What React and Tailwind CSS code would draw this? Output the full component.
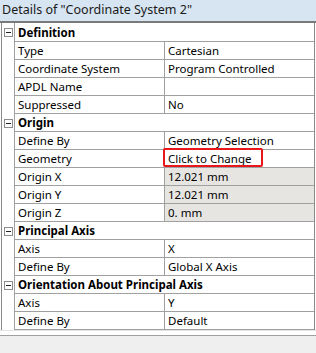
import React from "react";

const sections = [
  {
    title: "Definition",
    first: true,
    rows: [
      ["Type", "Cartesian"],
      ["Coordinate System", "Program Controlled"],
      ["APDL Name", ""],
      ["Suppressed", "No"],
    ],
  },
  {
    title: "Origin",
    rows: [
      ["Define By", "Geometry Selection"],
      ["Geometry", "Click to Change", "red"],
      ["Origin X", "12.021 mm", "gray"],
      ["Origin Y", "12.021 mm", "gray"],
      ["Origin Z", "0. mm", "gray"],
    ],
  },
  {
    title: "Principal Axis",
    rows: [
      ["Axis", "X"],
      ["Define By", "Global X Axis"],
    ],
  },
  {
    title: "Orientation About Principal Axis",
    rows: [
      ["Axis", "Y"],
      ["Define By", "Default"],
    ],
  },
];

function Minus() {
  return (
    <div className="w-[9px] h-[9px] border border-[#8c8c8c] bg-white flex items-center justify-center">
      <div className="w-[5px] h-[1px] bg-[#202020]" />
    </div>
  );
}

export default function App() {
  return (
    <div
      className="w-[316px] h-[353px] bg-white flex flex-col overflow-hidden text-black"
      style={{ fontFamily: '"Noto Sans", "Open Sans", sans-serif' }}
    >
      <div className="h-[21px] bg-[#d7e4f1] flex items-center pl-[2px] text-[12.5px] text-[#1a1a1a] leading-none">
        Details of "Coordinate System 2"
      </div>
      <div className="h-[2px] bg-[#7a7a7a]" />
      <div className="h-[307px] ml-[1px] w-[314px] border-l border-r border-[#8a8a8a] overflow-hidden text-[11.5px] leading-none">
        {sections.map((s) => (
          <div key={s.title}>
            <div className={`flex ${s.first ? "h-[19px]" : "h-[18px]"}`}>
              <div className="w-[13px] flex items-center justify-end pr-[1px] border-r border-[#a0a0a0]">
                <Minus />
              </div>
              <div className="flex-1 border-b border-[#a0a0a0] flex items-center pl-[3px] pt-[1px] font-bold whitespace-nowrap overflow-hidden">
                {s.title}
              </div>
            </div>
            {s.rows.map(([k, v, kind], i) => (
              <div key={i} className="flex h-[18px]">
                <div className="w-[13px] border-r border-[#a0a0a0]" />
                <div className="w-[150px] border-b border-r border-[#a0a0a0] flex items-center pl-[3px] pt-[1px] whitespace-nowrap">
                  {k}
                </div>
                <div
                  className={`relative flex-1 border-b border-[#a0a0a0] flex items-center pl-[3px] pt-[1px] whitespace-nowrap ${
                    kind === "gray" ? "bg-[#e7e5e2]" : ""
                  }`}
                >
                  {v}
                  {kind === "red" && (
                    <div className="absolute left-[-2px] top-[-2px] w-[100px] h-[19px] border-2 border-[#e8171b] rounded-[2px]" />
                  )}
                </div>
              </div>
            ))}
          </div>
        ))}
      </div>
      <div className="h-[1px] bg-[#e3e3e3]" />
      <div className="h-[4px] bg-white" />
      <div className="flex-1 border-t border-[#a0a0a0] bg-[#efefef]" />
    </div>
  );
}
